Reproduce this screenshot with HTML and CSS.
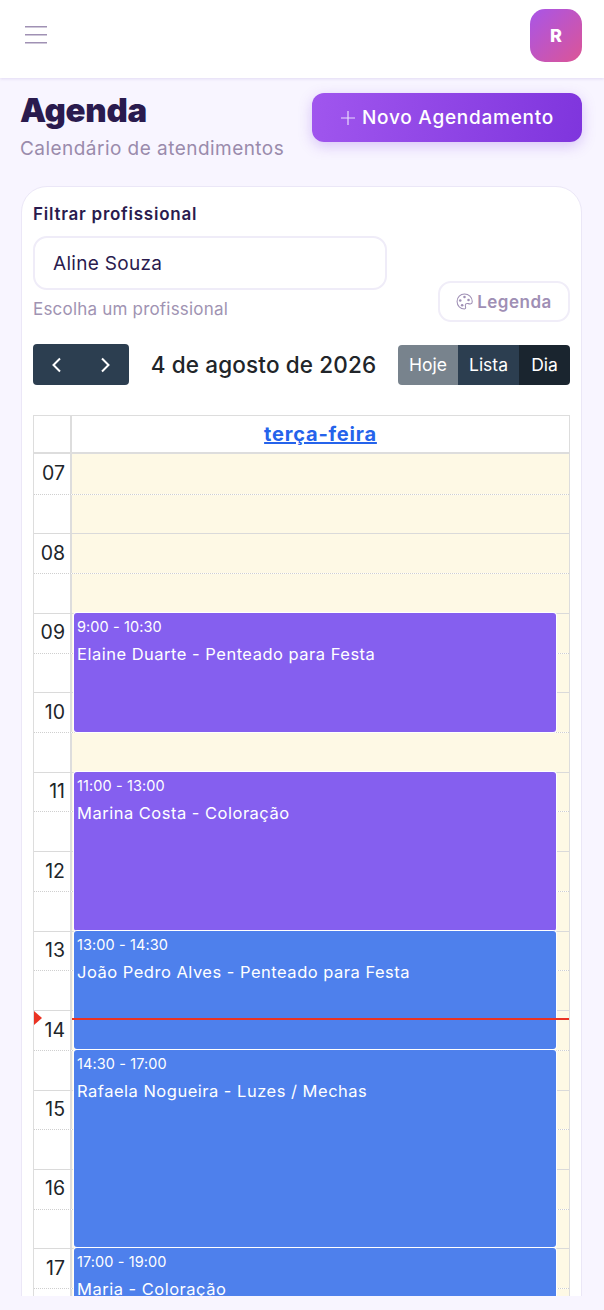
FILE: index.html
```html
<!DOCTYPE html>
<html lang="pt-BR">
<head>
<meta charset="utf-8">
<title>Agenda</title>
<link rel="stylesheet" href="styles.css">
</head>
<body>
<header class="topbar">
  <svg class="menu" width="22" height="24" viewBox="0 0 22 24"><path d="M0 4.800h22M0 12.800h22M0 20.800h22"/></svg>
  <div class="avatar">R</div>
</header>
<main class="page">
  <div class="head">
    <div>
      <h1 class="title">Agenda</h1>
      <p class="subtitle">Calendário de atendimentos</p>
    </div>
    <button class="new-btn"><svg width="16" height="16" viewBox="0 0 16 16"><path d="M8 1v14M1 8h14"/></svg>Novo Agendamento</button>
  </div>
  <section class="card">
    <div class="filter">
      <div class="field">
        <div class="label">Filtrar profissional</div>
        <div class="select">Aline Souza</div>
        <div class="hint">Escolha um profissional</div>
      </div>
      <button class="legend"><svg width="17" height="17" viewBox="0 0 16 16"><path class="pal" d="M8 1a7 7 0 1 0 0 14c1.700 0 .9-1.800.8-3-.1-1.500.8-2.400 2.200-2.100 1.500.3 4.300 1.300 4.300-2A7.300 7 0 0 0 8 1z"/><circle cx="8" cy="3.700" r="1.200"/><circle cx="11.800" cy="6.600" r="1.200"/><circle cx="4" cy="7" r="1.200"/><circle cx="5.800" cy="11.500" r="1.200"/></svg>Legenda</button>
    </div>
    <div class="toolbar">
      <div class="nav">
        <svg width="16" height="16" viewBox="0 0 16 16"><path d="M11 1.500 4.500 8l6.500 6.500"/></svg>
        <svg width="16" height="16" viewBox="0 0 16 16"><path d="M5 1.500 11.500 8 5 14.500"/></svg>
      </div>
      <h2 class="date">4 de agosto de 2026</h2>
      <div class="views">
        <span class="view today">Hoje</span><span class="view list">Lista</span><span class="view day">Dia</span>
      </div>
    </div>
    <div class="cal">
      <div class="cal-head">
        <div class="corner"></div>
        <a class="weekday">terça-feira</a>
      </div>
      <div class="grid">
        <div class="row major"><div class="axis">07</div><div class="lane"></div></div>
        <div class="row"><div class="axis"></div><div class="lane"></div></div>
        <div class="row major"><div class="axis">08</div><div class="lane"></div></div>
        <div class="row"><div class="axis"></div><div class="lane"></div></div>
        <div class="row major"><div class="axis">09</div><div class="lane"></div></div>
        <div class="row"><div class="axis"></div><div class="lane"></div></div>
        <div class="row major"><div class="axis">10</div><div class="lane"></div></div>
        <div class="row"><div class="axis"></div><div class="lane"></div></div>
        <div class="row major"><div class="axis">11</div><div class="lane"></div></div>
        <div class="row"><div class="axis"></div><div class="lane"></div></div>
        <div class="row major"><div class="axis">12</div><div class="lane"></div></div>
        <div class="row"><div class="axis"></div><div class="lane"></div></div>
        <div class="row major"><div class="axis">13</div><div class="lane"></div></div>
        <div class="row"><div class="axis"></div><div class="lane"></div></div>
        <div class="row major"><div class="axis">14</div><div class="lane"></div></div>
        <div class="row"><div class="axis"></div><div class="lane"></div></div>
        <div class="row major"><div class="axis">15</div><div class="lane"></div></div>
        <div class="row"><div class="axis"></div><div class="lane"></div></div>
        <div class="row major"><div class="axis">16</div><div class="lane"></div></div>
        <div class="row"><div class="axis"></div><div class="lane"></div></div>
        <div class="row major"><div class="axis">17</div><div class="lane"></div></div>
        <div class="row"><div class="axis"></div><div class="lane"></div></div>
        <div class="events">
          <div class="event purple" style="top:159px;height:119px"><div class="time">9:00 - 10:30</div><div class="what">Elaine Duarte - Penteado para Festa</div></div>
          <div class="event purple" style="top:317.500px;height:159px"><div class="time">11:00 - 13:00</div><div class="what">Marina Costa - Coloração</div></div>
          <div class="event blue" style="top:477px;height:118px"><div class="time">13:00 - 14:30</div><div class="what">João Pedro Alves - Penteado para Festa</div></div>
          <div class="event blue" style="top:596px;height:197px"><div class="time">14:30 - 17:00</div><div class="what">Rafaela Nogueira - Luzes / Mechas</div></div>
          <div class="event blue" style="top:794px;height:159px"><div class="time">17:00 - 19:00</div><div class="what">Maria - Coloração</div></div>
        </div>
        <div class="now-arrow"></div>
        <div class="now-line"></div>
      </div>
    </div>
  </section>
</main>
</body>
</html>
```
FILE: styles.css
```css
* { box-sizing: border-box; }
html, body { margin: 0; height: 100%; }
body {
  background: #f8f5ff;
  font-family: Inter, "Noto Sans", sans-serif;
  color: #2a1b4e;
  overflow: hidden;
}
button { font-family: inherit; cursor: pointer; }

.topbar {
  height: 78px;
  background: #fff;
  display: flex;
  align-items: center;
  justify-content: space-between;
  padding: 0 22px 0 25px;
  box-shadow: 0 1px 3px rgba(90, 60, 170, .14);
  position: relative;
}
.menu { margin-top: -11px; fill: none; stroke: #a091b4; stroke-width: 1.500; }
.avatar {
  width: 52px;
  height: 53px;
  margin-top: -8px;
  border-radius: 15px;
  background: linear-gradient(135deg, #a855e8, #dc5596);
  color: #fff;
  font-weight: 800;
  font-size: 18px;
  display: flex;
  align-items: center;
  justify-content: center;
}

.page { height: 1218px; overflow: hidden; padding: 15px 22px 0 21px; }
.head { display: flex; justify-content: space-between; align-items: flex-start; height: 93px; }
.title { margin: -1px 0 0 -1px; font-size: 33px; line-height: 36px; font-weight: 900; letter-spacing: -.3px; color: #2a1b4e; }
.subtitle { margin: 9px 0 0 -1px; font-size: 19px; line-height: 24px; color: #9a8bac; letter-spacing: .46px; }
.new-btn {
  width: 270px;
  height: 49px;
  border: 0;
  border-radius: 12px;
  background: linear-gradient(100deg, #a056ee, #7f35dd);
  color: #fff;
  font-size: 19px;
  font-weight: 500;
  letter-spacing: .75px;
  display: flex;
  align-items: center;
  justify-content: center;
  gap: 6px;
  box-shadow: 0 4px 14px rgba(130, 70, 225, .28);
}
.new-btn svg { fill: none; stroke: #e9dcfc; stroke-width: 1.200; }

.card {
  height: 1200px;
  background: #fff;
  border: 1px solid #ebe7f7;
  border-radius: 26px 26px 0 0;
  padding: 16px 11px 0;
}
.filter { display: flex; justify-content: space-between; align-items: flex-end; }
.field { width: 354px; }
.label { font-size: 17px; line-height: 22px; font-weight: 600; letter-spacing: .75px; color: #2a1b4e; }
.select {
  height: 54px;
  margin-top: 11px;
  border: 2px solid #efecf8;
  border-radius: 14px;
  padding: 0 18px;
  font-size: 19px;
  line-height: 52px;
  letter-spacing: .3px;
  color: #2a1b4e;
}
.hint { margin-top: 9px; font-size: 17px; line-height: 20px; letter-spacing: .2px; color: #a093b2; }
.legend {
  width: 132px;
  height: 41px;
  margin-bottom: -3px;
  background: #fff;
  border: 2px solid #f0edf8;
  border-radius: 13px;
  color: #9f8fb5;
  font-size: 17px;
  font-weight: 600;
  letter-spacing: .5px;
  display: flex;
  align-items: center;
  justify-content: center;
  gap: 4px;
}
.legend svg { fill: #9f8fb5; }
.legend .pal { fill: none; stroke: #9f8fb5; stroke-width: 1; }

.toolbar { display: flex; align-items: center; justify-content: space-between; margin-top: 25px; height: 41px; }
.nav {
  width: 96px;
  height: 41px;
  background: #2c3e50;
  border-radius: 4px;
  display: flex;
  align-items: center;
  justify-content: space-around;
}
.nav svg { fill: none; stroke: #fff; stroke-width: 2; }
.date { margin: 0; font-size: 22.500px; font-weight: 500; color: #212529; letter-spacing: .15px; }
.views { display: flex; height: 40px; border-radius: 4px; overflow: hidden; }
.view { color: #fff; font-size: 17.500px; line-height: 40px; text-align: center; }
.today { width: 60px; background: #78838d; }
.list { width: 61px; background: #2c3e50; }
.day { width: 51px; background: #1a252f; }

.cal { margin-top: 30px; width: 537px; border: 1px solid #ddd; border-bottom: 0; }
.cal-head { display: flex; height: 38px; border-bottom: 2px solid #ddd; }
.corner { width: 38px; border-right: 2px solid #ddd; }
.weekday {
  flex: 1;
  text-align: center;
  font-size: 20px;
  line-height: 36px;
  font-weight: 700;
  letter-spacing: .8px;
  color: #2563eb;
  text-decoration: underline;
}
.grid { position: relative; }
.row { display: flex; height: 39.725px; border-top: 1px dotted #cfcfcf; }
.row.major { border-top: 1px solid #dadada; }
.row:first-child { border-top: 0; }
.axis {
  width: 38px;
  flex: none;
  border-right: 2px solid #ddd;
  padding: 6.500px 5px 0 0;
  text-align: right;
  font-size: 19.500px;
  line-height: 24px;
  color: #212529;
  background: #fff;
}
.lane { flex: 1; background: #fef9e5; }

.events { position: absolute; top: 0; left: 40px; right: 13px; }
.event {
  position: absolute;
  left: 0;
  right: 0;
  border-radius: 3px;
  padding: 3px 3px 0;
  color: #fff;
  box-shadow: 0 0 0 1px #fff;
  overflow: hidden;
}
.purple { background: #855fef; }
.blue { background: #4e80ec; }
.time { font-size: 14.500px; line-height: 21px; letter-spacing: .1px; }
.what { font-size: 16.500px; line-height: 22px; margin-top: 6px; letter-spacing: .5px; }

.now-arrow {
  position: absolute;
  left: 0;
  top: 557px;
  border-left: 8px solid #ea3323;
  border-top: 7px solid transparent;
  border-bottom: 7px solid transparent;
}
.now-line { position: absolute; left: 38px; right: 0; top: 564px; height: 1.500px; background: #ea3323; }
```
